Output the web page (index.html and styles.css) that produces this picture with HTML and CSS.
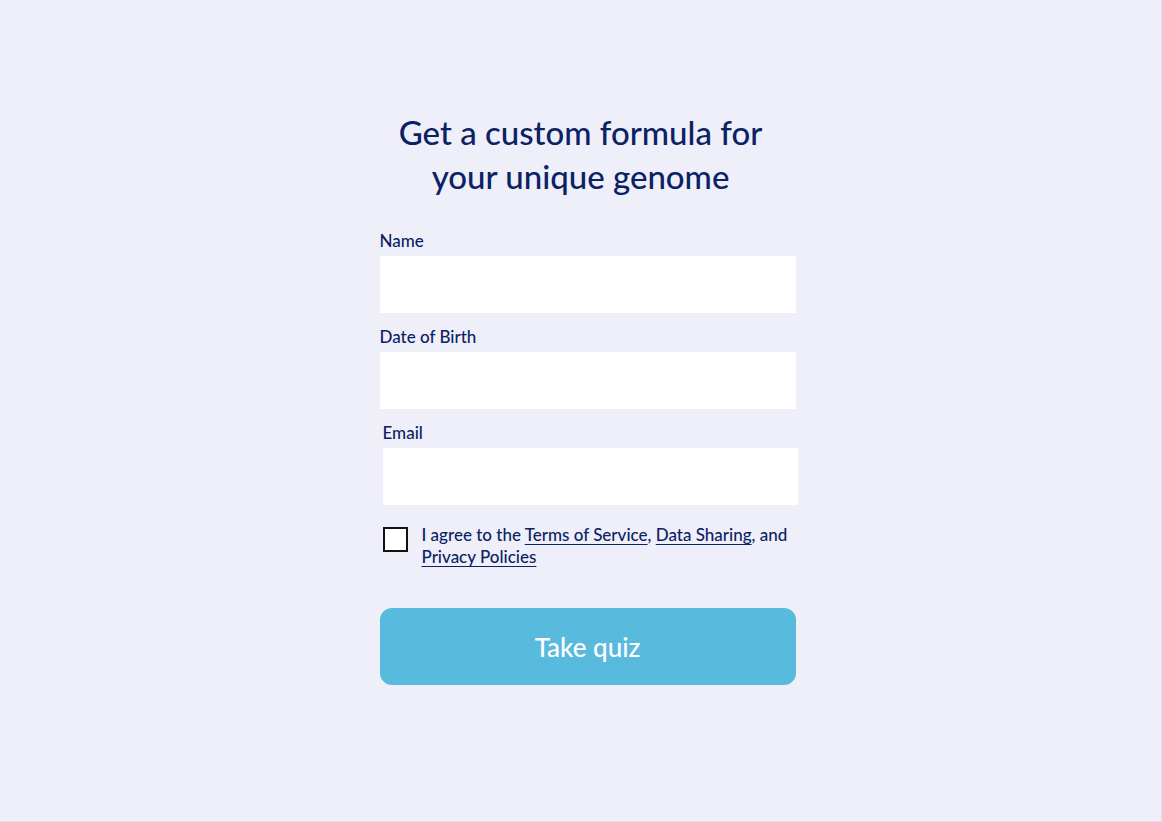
FILE: index.html
```html
<!DOCTYPE html>
<html lang="en">
<head>
<meta charset="utf-8">
<meta name="viewport" content="width=device-width, initial-scale=1">
<title>Get a custom formula</title>
<link rel="stylesheet" href="styles.css">
</head>
<body class="page">
<main class="signup">
  <h1 class="title">Get a custom formula for<br>your unique genome</h1>
  <form class="form">
    <div class="group">
      <div class="field">
        <label class="label" for="name">Name</label>
        <input class="input" id="name" type="text" autocomplete="name">
      </div>
      <div class="field">
        <label class="label" for="dob">Date of Birth</label>
        <input class="input" id="dob" type="text" autocomplete="bday">
      </div>
    </div>
    <div class="group group-contact">
      <div class="field">
        <label class="label" for="email">Email</label>
        <input class="input" id="email" type="email" autocomplete="email">
      </div>
      <div class="consent">
        <input class="checkbox" id="agree" type="checkbox">
        <label class="consent-text" for="agree">I agree to the <a class="link" href="#terms">Terms of Service</a>, <a class="link" href="#sharing">Data Sharing</a>, and <a class="link" href="#privacy">Privacy Policies</a></label>
      </div>
    </div>
    <button class="submit" type="submit">Take quiz</button>
  </form>
</main>
</body>
</html>
```
FILE: styles.css
```css
* {
  box-sizing: border-box;
}

.page {
  margin: 0;
  min-height: 100vh;
  padding: 110px 16px 32px;
  background: #efeff9;
  border-right: 1px solid #dfdfe8;
  border-bottom: 1px solid #dfdfe8;
  color: #0b2265;
  font-family: Futura, "Futura PT", Lato, sans-serif;
  font-weight: 500;
}

.signup {
  max-width: 430px;
  margin: 0 auto;
}

.title {
  margin: 0 0 32px;
  font-size: 33px;
  line-height: 44px;
  font-weight: 500;
  text-align: center;
}

.form,
.group {
  display: flex;
  flex-direction: column;
  gap: 13px;
}

.form {
  padding-left: 14px;
}

.group-contact {
  margin: 0 -2px 0 3px;
}

.field {
  display: flex;
  flex-direction: column;
  gap: 4px;
}

.label,
.consent-text {
  font-size: 17px;
  line-height: 22px;
}

.input {
  width: 100%;
  height: 57px;
  padding: 0 16px;
  border: 0;
  border-radius: 0;
  background: #fff;
  color: inherit;
  font: inherit;
  font-size: 17px;
}

.consent {
  display: flex;
  align-items: flex-start;
  gap: 14px;
  margin: 6px 0 27px;
}

.checkbox {
  flex: none;
  appearance: none;
  width: 25px;
  height: 25px;
  margin: 3px 0 0;
  border: 2px solid #111;
  background: #fff;
}

.checkbox:checked {
  background: #0b2265;
  box-shadow: inset 0 0 0 3px #fff;
}

.link {
  color: inherit;
  text-decoration: underline;
  text-decoration-thickness: 1px;
  text-underline-offset: 3px;
  text-decoration-skip-ink: none;
}

.submit {
  height: 77px;
  border: 0;
  border-radius: 12px;
  background: #58badd;
  color: #fff;
  font: inherit;
  font-size: 26px;
}
```
